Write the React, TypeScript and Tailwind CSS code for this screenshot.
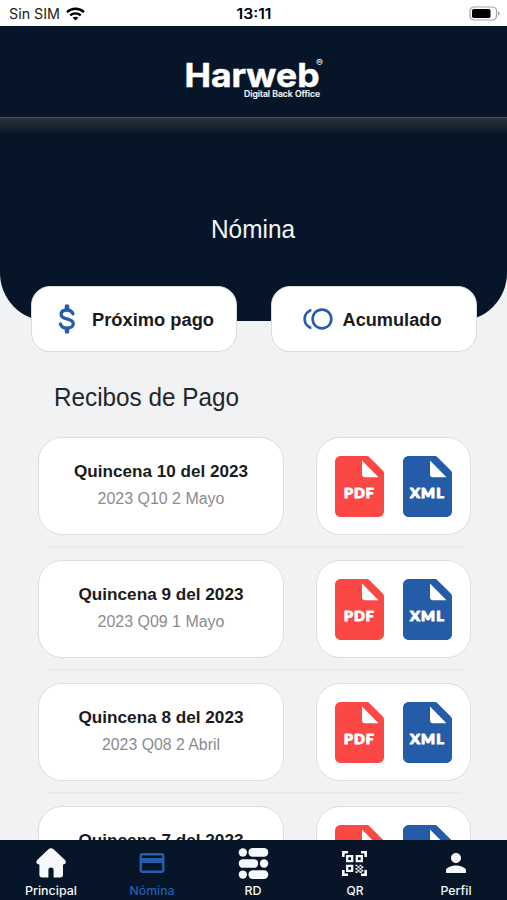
import type { ReactNode } from "react";
import { MdCreditCard, MdPerson, MdToll } from "react-icons/md";

interface Receipt {
  id: number;
  title: string;
  period: string;
}

interface NavItem {
  label: string;
  icon: ReactNode;
  active?: boolean;
}

const receipts: Receipt[] = [
  { id: 10, title: "Quincena 10 del 2023", period: "2023 Q10 2 Mayo" },
  { id: 9, title: "Quincena 9 del 2023", period: "2023 Q09 1 Mayo" },
  { id: 8, title: "Quincena 8 del 2023", period: "2023 Q08 2 Abril" },
  { id: 7, title: "Quincena 7 del 2023", period: "2023 Q07 1 Abril" },
];

// svg text keeps each label at a fixed width
function Label({
  children,
  width,
  size,
  length,
  className,
}: {
  children: string;
  width: number;
  size: number;
  length: number;
  className: string;
}) {
  return (
    <svg width={width} height={size * 1.4} overflow="visible" className={className}>
      <text
        x={width / 2}
        y={size}
        fontSize={size}
        textAnchor="middle"
        textLength={length}
        lengthAdjust="spacingAndGlyphs"
        fill="currentColor"
      >
        {children}
      </text>
    </svg>
  );
}

function WifiIcon() {
  return (
    <svg width="19" height="14" viewBox="0 0 19 14" fill="none" stroke="#000">
      <path d="M1 5.1C5.7.7 13.3.7 18 5.1" strokeWidth="2.5" />
      <path d="M4.2 8.4c3-2.7 7.6-2.7 10.6 0" strokeWidth="2.4" />
      <path d="M9.5 13.6 6.6 10.7c1.7-1.4 4.1-1.4 5.8 0Z" fill="#000" stroke="none" />
    </svg>
  );
}

function BatteryIcon() {
  return (
    <svg width="32" height="15" viewBox="0 0 32 15">
      <rect x="1" y="1" width="26.5" height="13" rx="4" fill="none" stroke="#a3a3a3" strokeWidth="1.2" />
      <rect x="3" y="3" width="18.5" height="9" rx="1.8" fill="#000" />
      <path d="M29 5.3c2.2.8 2.2 3.6 0 4.4Z" fill="#a3a3a3" />
    </svg>
  );
}

function DollarIcon() {
  return (
    <svg width="18" height="30" viewBox="0 0 18 30" fill="none" stroke="#255dab" strokeLinecap="round">
      <path d="M9 2.6v2.4M9 25v2.4" strokeWidth="4.6" />
      <path
        d="M15 9.8C13.9 7.2 11.8 6 9 6c-3.6 0-5.9 1.7-5.9 4.4 0 2.7 2.3 3.6 5.9 4.5 3.9 1 6.3 2 6.3 4.8 0 2.7-2.5 4.4-6.3 4.4-3.4 0-5.7-1.5-6.6-4.1"
        strokeWidth="3.3"
      />
    </svg>
  );
}

function FileIcon({ label, color }: { label: string; color: string }) {
  return (
    <svg width="49" height="61" viewBox="0 0 49 61">
      <path d="M6 0h25.5c1.3 0 2.3.5 3.2 1.4l12.8 12.9c1 1 1.5 2.1 1.5 3.5V55c0 3.6-2.3 6-6 6H6c-3.6 0-6-2.4-6-6V6c0-3.6 2.4-6 6-6Z" fill={color} />
      <path d="M27 4.5 43.5 21.3H30c-2 0-3-1-3-3Z" fill="#fff" />
      <text
        x="24.5"
        y="42.3"
        textAnchor="middle"
        textLength={label === "PDF" ? 31 : 35}
        lengthAdjust="spacingAndGlyphs"
        fill="#fff"
        stroke="#fff"
        strokeWidth="1"
        strokeLinejoin="round"
        className="font-['Lato'] text-[13px] font-black tracking-[1px]"
      >
        {label}
      </text>
    </svg>
  );
}

function HomeIcon() {
  return (
    <svg width="30" height="30" viewBox="0 0 30 30" fill="currentColor">
      <path d="M12.4 1.2c1.5-1.4 3.7-1.4 5.2 0l11.2 10.6c2 2 .9 4.5-1.8 4.8v10.2c0 1.7-1.1 2.8-2.8 2.8H17.6v-7.7c0-3.2-5.2-3.2-5.2 0v7.7H6.2c-1.7 0-2.8-1.1-2.8-2.8V16.6C.4 16.3-.6 13.8 1.4 11.8Z" />
    </svg>
  );
}

function RowsIcon() {
  return (
    <svg width="31" height="31" viewBox="0 0 31 32" fill="currentColor">
      <circle cx="4.5" cy="4.6" r="4.3" />
      <rect x="10.3" y=".1" width="20.4" height="9" rx="4.3" />
      <rect x=".3" y="11.5" width="20" height="9" rx="4.3" />
      <circle cx="26.4" cy="16" r="4.3" />
      <circle cx="4.5" cy="27.4" r="4.3" />
      <rect x="10.3" y="22.9" width="20.4" height="9" rx="4.3" />
    </svg>
  );
}

function QrIcon() {
  return (
    <svg width="25" height="25" viewBox="0 0 25 25" fill="none" stroke="currentColor">
      <path d="M6 1.3H1.3V6M19 1.3h4.7V6M6 23.7H1.3V19M19 23.7h4.7V19" strokeWidth="2.6" />
      <path d="M5.2 5.2h5v5h-5ZM14.8 5.2h5v5h-5ZM5.2 14.8h5v5h-5Z" strokeWidth="2.3" />
      <path
        d="M13.5 14.5h2M17.5 14.5h2M15.5 16.2h2M19.3 16.2h2M13.5 17.9h2M17.5 17.9h2M15.5 19.6h2M19.3 19.6h2M13.5 21.2h2M17.5 21.2h2"
        strokeWidth="1.7"
      />
    </svg>
  );
}

const navItems: NavItem[] = [
  { label: "Principal", icon: <HomeIcon /> },
  { label: "Nómina", icon: <MdCreditCard size={30} />, active: true },
  { label: "RD", icon: <RowsIcon /> },
  { label: "QR", icon: <QrIcon /> },
  { label: "Perfil", icon: <MdPerson size={30} /> },
];

const navLengths: Record<string, number> = {
  Principal: 52,
  Nómina: 45,
  RD: 17,
  QR: 17,
  Perfil: 31,
};

function StatusBar() {
  return (
    <div className="grid h-[26px] shrink-0 grid-cols-3 items-center bg-white pr-1.5 pl-2 pt-0.5 font-['Inter']">
      <div className="flex items-center gap-[5px]">
        <Label width={53} size={14.5} length={51} className="text-[#222]">
          Sin SIM
        </Label>
        <WifiIcon />
      </div>
      <Label width={40} size={14} length={35} className="mt-0.5 justify-self-center font-semibold text-black">
        13:11
      </Label>
      <div className="-mt-0.5 justify-self-end">
        <BatteryIcon />
      </div>
    </div>
  );
}

function Logo() {
  return (
    <svg width="144" height="46" viewBox="0 0 144 46" fill="#fff" overflow="visible">
      <text
        x="2.5"
        y="32.5"
        textLength="135"
        lengthAdjust="spacingAndGlyphs"
        stroke="#fff"
        strokeWidth="0.5"
        strokeLinejoin="round"
        className="font-['Inter'] text-[33px] font-bold"
      >
        Harweb
      </text>
      <text x="134" y="11.5" textLength="7" lengthAdjust="spacingAndGlyphs" className="font-['Inter'] text-[9px]">
        ®
      </text>
      <text
        x="62"
        y="43"
        textLength="76"
        lengthAdjust="spacingAndGlyphs"
        stroke="#fff"
        strokeWidth="0.2"
        className="font-['Inter'] text-[9px] font-medium"
      >
        Digital Back Office
      </text>
    </svg>
  );
}

function ReceiptRow({ title, period }: Receipt) {
  return (
    <li className="h-[123px]">
      <div className="flex justify-between pr-9 pl-[38px]">
        <div className="flex h-[98px] w-[246px] flex-col items-center rounded-[24px] border border-[#dcdedf] bg-white pt-[22px]">
          <Label width={220} size={17} length={title.length === 20 ? 174 : 165} className="font-bold text-[#1b1b1b]">
            {title}
          </Label>
          <Label width={220} size={16} length={period.endsWith("Abril") ? 118 : 127} className="mt-1 text-[#8c8c8c]">
            {period}
          </Label>
        </div>
        <div className="flex h-[98px] w-[155px] items-center justify-center gap-[19px] rounded-[24px] border border-[#dcdedf] bg-white">
          <FileIcon label="PDF" color="#fc4845" />
          <FileIcon label="XML" color="#255ca8" />
        </div>
      </div>
      <div className="mt-[11px] mr-[45px] ml-12 h-[2px] bg-[#e8eaeb]" />
    </li>
  );
}

export default function App() {
  return (
    <div className="flex h-[900px] w-[507px] flex-col overflow-hidden bg-[#f0f2f3] font-['Liberation_Sans',sans-serif]">
      <StatusBar />
      <header className="flex h-[91px] shrink-0 justify-center bg-[#061628] pt-7">
        <Logo />
      </header>

      <main className="min-h-0 flex-1 overflow-hidden">
        <div className="h-[204px] rounded-b-[48px] bg-[#061628]">
          <div className="h-[18px] border-t border-[#4a4f56] bg-linear-to-b from-[#29313a] to-[#061628]" />
          <h1 className="flex justify-center pt-[78px] pr-0.5 text-[#f3f6fa]">
            <Label width={120} size={25} length={84} className="">
              Nómina
            </Label>
          </h1>
        </div>

        <div className="relative -mt-[35px] flex justify-between pr-[30px] pl-[31px]">
          <button className="flex h-[66px] w-[206px] items-center rounded-[19px] border border-[#d9dcde] bg-white pl-[26px]">
            <DollarIcon />
            <Label width={122} size={18} length={122} className="mt-[3px] ml-4 font-bold text-[#1b1b1b]">
              Próximo pago
            </Label>
          </button>
          <button className="flex h-[66px] w-[206px] items-center rounded-[19px] border border-[#d9dcde] bg-white pl-[30px]">
            <MdToll size={32} color="#255dab" />
            <Label width={100} size={18} length={99} className="mt-[3px] ml-2 font-bold text-[#1b1b1b]">
              Acumulado
            </Label>
          </button>
        </div>

        <h2 className="mt-[29px] ml-[53px] text-[#24272a]">
          <Label width={187} size={25} length={185} className="">
            Recibos de Pago
          </Label>
        </h2>

        <ul className="mt-[21px]">
          {receipts.map((receipt) => (
            <ReceiptRow key={receipt.id} {...receipt} />
          ))}
        </ul>
      </main>

      <nav className="grid h-[60px] shrink-0 grid-cols-5 bg-[#061628] font-['Inter']">
        {navItems.map((item) => (
          <a
            key={item.label}
            className={item.active ? "flex flex-col items-center text-[#255dab]" : "flex flex-col items-center text-[#f6f8fb]"}
          >
            <span className="flex h-[46px] items-center">{item.icon}</span>
            <Label width={80} size={12} length={navLengths[item.label]} className="-mt-[3px] shrink-0 font-medium">
              {item.label}
            </Label>
          </a>
        ))}
      </nav>
    </div>
  );
}
